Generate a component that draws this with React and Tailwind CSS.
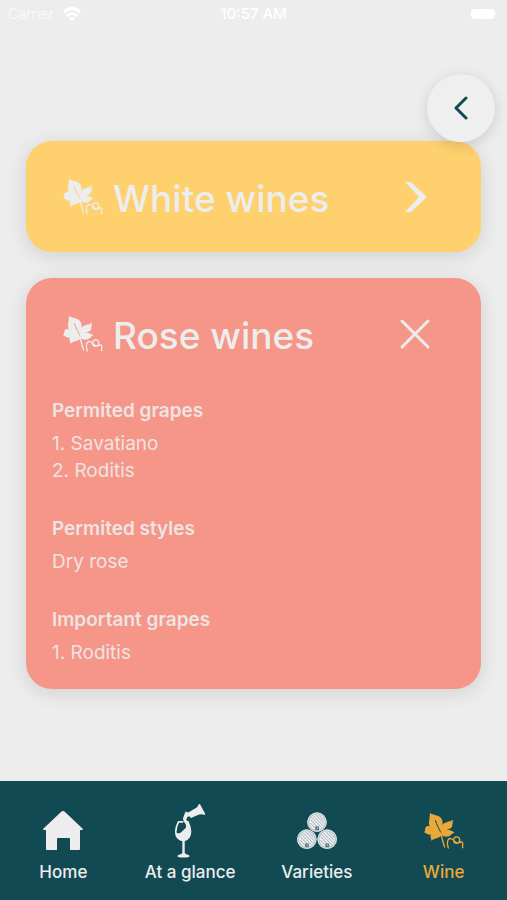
import React, { useState } from "react";

function LeafIcon({ className, vein }) {
    return (
        <svg viewBox="72 58 122 116" fill="none" className={className} aria-hidden="true">
            <path
                fill="currentColor"
                d="M90 60 C97 67 112 66 121 73 C128 79 130 88 128 98 C136 87 149 90 161 82 C158 90 161 101 154 107 C150 110 146 110 141 111 C150 112 158 116 165 121 C156 122 154 132 142 133 C135 134 130 131 126 128 C119 139 107 136 94 146 C96 139 88 133 94 127 C85 129 80 123 72 120 C78 115 73 105 80 102 C83 100 87 101 90 102 C83 91 91 76 90 60 Z"
            />
            <path stroke={vein} strokeWidth="3" strokeLinecap="round" d="M107 84 C110 98 121 112 124 124" />
            <path stroke="currentColor" strokeWidth="4" strokeLinecap="round" d="M123 122 C127 136 129 150 135 165" />
            <path
                stroke="currentColor"
                strokeWidth="4"
                strokeLinecap="round"
                d="M146 168 C140 151 144 138 154 139 C164 140 166 154 175 152 C185 149 182 133 171 134 C160 135 160 150 168 153 C178 156 188 143 190 154 C191 160 187 164 191 167"
            />
        </svg>
    );
}

function HomeIcon() {
    return (
        <svg viewBox="0 0 40 40" fill="currentColor" className="size-10" aria-hidden="true">
            <path d="M20 0 Q21 0 22 1 L40 18 Q40 19 39 19 L37 19 V38 Q37 39 36 39 H27 V28 Q27 27 26 27 H15 Q14 27 14 28 V39 H4 Q3 39 3 38 V19 H1 Q0 19 0 18 L18 1 Q19 0 20 0 Z" />
        </svg>
    );
}

function GlassIcon() {
    return (
        <svg viewBox="0 0 94 162" fill="none" className="h-14 w-8" aria-hidden="true">
            <path fill="currentColor" d="M29 36 L34 24 L42 27 L62 15 Q70 12 72 3 L76 2 L92 31 L89 34 Q80 29 70 34 L50 43 L45 38 L39 40 L38 45 L28 46 Z" />
            <path stroke="currentColor" strokeWidth="9" strokeLinecap="round" d="M32 42 C27 51 41 55 40 66 C40 72 37 78 36 86" />
            <path stroke="currentColor" strokeWidth="5" d="M13 54 C4 73 2 91 12 102 C24 113 37 110 44 99 C52 86 46 65 41 54 L34 54 M12 54 H27" />
            <path fill="currentColor" d="M7 86 C20 94 29 72 44 66 C50 84 48 99 39 106 C27 112 14 108 7 94 Z" />
            <path stroke="currentColor" strokeWidth="7" d="M28 106 V152" />
            <path fill="currentColor" d="M24 145 H32 C33 151 45 150 46 155 Q45 159 28 159 Q11 159 10 155 C11 150 23 151 24 145 Z" />
        </svg>
    );
}

function Barrel({ x, y }) {
    return (
        <g transform={`translate(${x} ${y})`}>
            <circle r="30" fill="#a9bcc1" />
            <circle r="28" fill="none" stroke="#dfe5e6" strokeWidth="3" />
            <circle r="24" fill="#ededed" />
            <path
                stroke="#9fb3b8"
                strokeWidth="3"
                d="M-20 -8 L7 21 M-17 -15 L14 17 M-11 -19 L18 11 M-3 -22 L21 4 M6 -21 L21 -5 M-21 2 L-4 20"
            />
            <path fill="#54747b" d="M-5 13 H6 V24 H-5 Z" />
            <circle cx="1" cy="18" r="2" fill="#ededed" />
        </g>
    );
}

function BarrelsIcon() {
    return (
        <svg viewBox="0 0 122 116" className="size-10" aria-hidden="true">
            <Barrel x={61} y={31} />
            <Barrel x={30} y={83} />
            <Barrel x={92} y={83} />
        </svg>
    );
}

const wines = [
    { name: "White wines", color: "bg-[#fed06e]", vein: "#fed06e", sections: [] },
    {
        name: "Rose wines",
        color: "bg-[#f69688]",
        vein: "#f69688",
        sections: [
            { title: "Permited grapes", lines: ["1. Savatiano", "2. Roditis"] },
            { title: "Permited styles", lines: ["Dry rose"] },
            { title: "Important grapes", lines: ["1. Roditis"] },
        ],
    },
];

const tabs = [
    { label: "Home", icon: <HomeIcon /> },
    { label: "At a glance", icon: <GlassIcon /> },
    { label: "Varieties", icon: <BarrelsIcon /> },
    { label: "Wine", icon: <LeafIcon className="size-10" vein="#124a53" />, active: true },
];

function StatusBar() {
    return (
        <div className="grid grid-cols-3 items-center h-7 px-2 text-sm text-white">
            <div className="flex items-center gap-2">
                <span className="opacity-70">Carrier</span>
                <svg viewBox="0 0 20 16" fill="none" stroke="currentColor" strokeWidth="3" className="h-4 w-5" aria-hidden="true">
                    <path d="M2 6 Q10 -1 18 6" />
                    <path d="M5 10 Q10 5 15 10" />
                    <path d="M10 15 L7 12 Q10 9 13 12 Z" fill="currentColor" stroke="none" />
                </svg>
            </div>
            <span className="text-center text-[15px] font-medium whitespace-nowrap">10:57 AM</span>
            <div className="justify-self-end mr-1 h-[10px] w-6 rounded-sm bg-white" />
        </div>
    );
}

function WineCard({ wine, open, onToggle }) {
    return (
        <section className={`rounded-[26px] shadow-[0_4px_20px_rgba(0,0,0,0.12)] ${wine.color}`}>
            <button
                type="button"
                onClick={onToggle}
                aria-expanded={open}
                className="flex items-center w-full h-[111px] pl-[37px] pr-[50px] text-left"
            >
                <LeafIcon className="size-10 shrink-0" vein={wine.vein} />
                <span className="flex-1 pt-1 pl-[10px] text-[37px] leading-[48px] font-medium whitespace-nowrap">{wine.name}</span>
                {open ? (
                    <svg viewBox="0 0 32 32" fill="none" stroke="currentColor" strokeWidth="3" strokeLinecap="round" className="size-8" aria-hidden="true">
                        <path d="M3 3 L29 29 M29 3 L3 29" />
                    </svg>
                ) : (
                    <svg viewBox="0 0 32 32" fill="currentColor" className="size-8" aria-hidden="true">
                        <path d="M6 1 H12 L27 15 Q28 16 27 17 L12 31 H6 L20 16 Z" />
                    </svg>
                )}
            </button>
            {open && (
                <div className="flex flex-col gap-[31px] px-[26px] pt-2 pb-[23px] text-[19px] leading-[27px]">
                    {wine.sections.map((section) => (
                        <div key={section.title}>
                            <h3 className="mb-[6px] font-semibold opacity-90">{section.title}</h3>
                            {section.lines.map((line) => (
                                <p key={line} className="opacity-90">{line}</p>
                            ))}
                        </div>
                    ))}
                </div>
            )}
        </section>
    );
}

function App() {
    const [opened, setOpened] = useState("Rose wines");

    return (
        <div className="flex flex-col min-h-screen bg-[#ededed] text-[#ededed] font-['Inter','Liberation_Sans',sans-serif]">
            <StatusBar />
            <main className="relative flex-1 px-[26px] pt-[113px]">
                {/* Back button floats over the first card */}
                <button
                    type="button"
                    aria-label="Back"
                    className="absolute top-[46px] right-3 z-10 flex items-center justify-center size-[68px] rounded-full bg-[#efefef] text-[#124a53] shadow-[0_3px_14px_rgba(0,0,0,0.14)]"
                >
                    <svg viewBox="0 0 24 24" fill="none" stroke="currentColor" strokeWidth="3" strokeLinecap="round" strokeLinejoin="round" className="size-6" aria-hidden="true">
                        <path d="M17 2 L7 12 L17 22" />
                    </svg>
                </button>
                <div className="flex flex-col gap-[26px]">
                    {wines.map((wine) => (
                        <WineCard
                            key={wine.name}
                            wine={wine}
                            open={opened === wine.name}
                            onToggle={() => setOpened(opened === wine.name ? "" : wine.name)}
                        />
                    ))}
                </div>
            </main>
            <nav className="grid grid-cols-4 h-[119px] bg-[#124a53]">
                {tabs.map((tab) => (
                    <a
                        key={tab.label}
                        href="#"
                        aria-current={tab.active ? "page" : undefined}
                        className={`flex flex-col items-center pt-5 text-[17px] leading-6 font-medium whitespace-nowrap ${tab.active ? "text-[#e9a93a]" : "text-[#ededed]"}`}
                    >
                        <span className="flex items-center justify-center h-[59px]">{tab.icon}</span>
                        {tab.label}
                    </a>
                ))}
            </nav>
        </div>
    );
}

export default App;
